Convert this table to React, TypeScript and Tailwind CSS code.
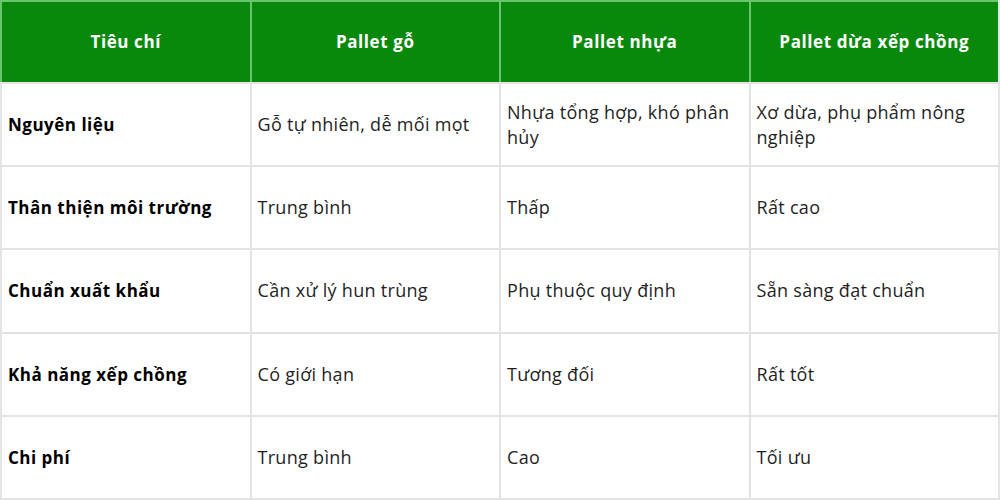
const headers = ["Tiêu chí", "Pallet gỗ", "Pallet nhựa", "Pallet dừa xếp chồng"];

const rows: string[][] = [
  ["Nguyên liệu", "Gỗ tự nhiên, dễ mối mọt", "Nhựa tổng hợp, khó phân hủy", "Xơ dừa, phụ phẩm nông nghiệp"],
  ["Thân thiện môi trường", "Trung bình", "Thấp", "Rất cao"],
  ["Chuẩn xuất khẩu", "Cần xử lý hun trùng", "Phụ thuộc quy định", "Sẵn sàng đạt chuẩn"],
  ["Khả năng xếp chồng", "Có giới hạn", "Tương đối", "Rất tốt"],
  ["Chi phí", "Trung bình", "Cao", "Tối ưu"],
];

export default function App() {
  return (
    <div className="w-[1000px] h-[500px] bg-white font-['Open_Sans',sans-serif]">
      <div className="grid grid-cols-4 grid-rows-[82px_repeat(5,1fr)] h-full border-r-2 border-b-2 border-[#e4e4e4]">
        {headers.map((h) => (
          <div
            key={h}
            className="flex items-center justify-center bg-[#08890c] text-white font-bold text-[17px] tracking-[0.6px] border-t-2 border-l-2 border-[#6cc36e]"
          >
            {h}
          </div>
        ))}
        {rows.map((row) =>
          row.map((cell, j) => (
            <div
              key={row[0] + j}
              className={
                "flex items-center pl-1.5 pr-3 border-t-2 border-l-2 border-[#e4e4e4] leading-[25px] " +
                (j === 0
                  ? "font-bold text-black text-[17px] tracking-[0.5px]"
                  : "text-[#1f1f1f] text-[18px] tracking-[0.3px]")
              }
            >
              {cell}
            </div>
          ))
        )}
      </div>
    </div>
  );
}
